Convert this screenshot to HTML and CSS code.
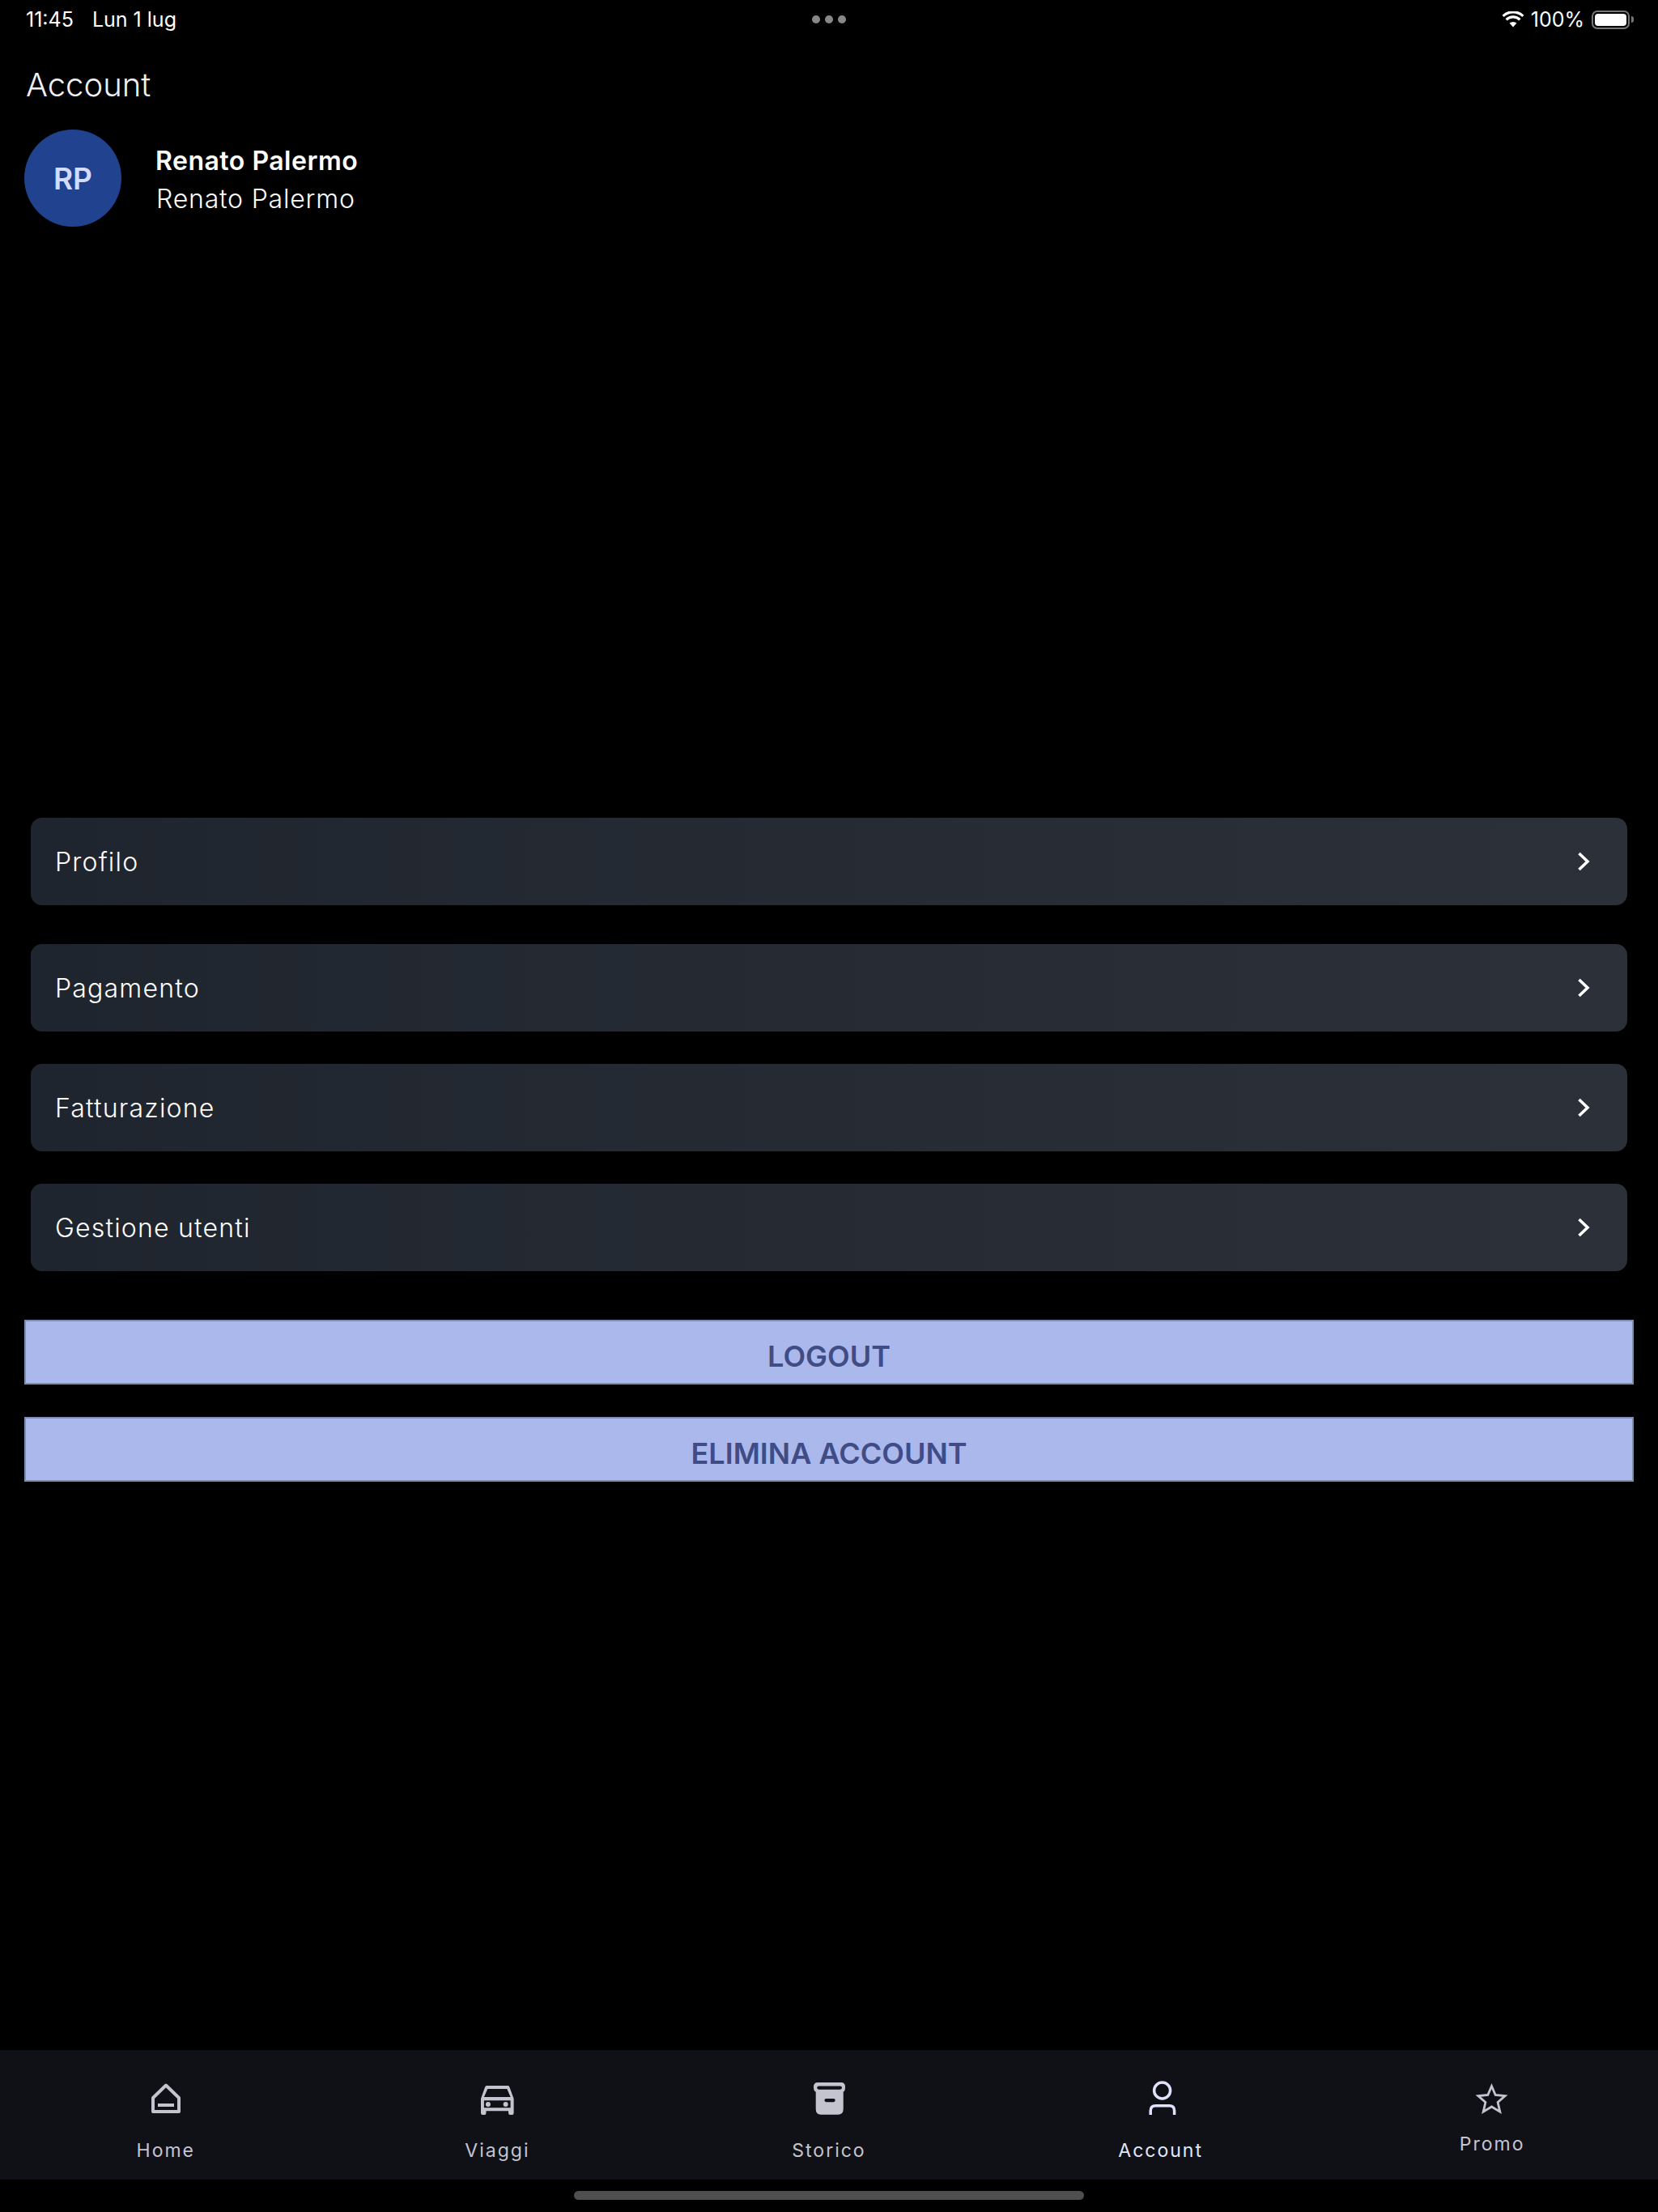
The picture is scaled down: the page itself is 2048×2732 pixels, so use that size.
FILE: index.html
```html
<!doctype html>
<html lang="it">
<head>
    <meta charset="UTF-8">
    <meta name="viewport" content="width=device-width, initial-scale=1.0">
    <title>Account</title>
    <link rel="stylesheet" href="styles.css">
</head>
<body>
<div class="page">
    <div class="statusbar">
        <div class="status-left"><span>11:45</span><span>Lun 1 lug</span></div>
        <div class="status-dots"><i></i><i></i><i></i></div>
        <div class="status-right">
            <svg class="wifi" width="28" height="20" viewBox="0 0 28 20">
                <path d="M14 19.500 L9.600 14.600 A6.600 6.600 0 0 1 18.400 14.600 Z" fill="#fff"/>
                <path d="M5.600 10.400 A12 12 0 0 1 22.400 10.400" fill="none" stroke="#fff" stroke-width="3.200"/>
                <path d="M1.600 5.800 A18 18 0 0 1 26.400 5.800" fill="none" stroke="#fff" stroke-width="3.200"/>
            </svg>
            <span>100%</span>
            <div class="battery"><div class="battery-fill"></div></div>
            <div class="battery-nub"></div>
        </div>
    </div>

    <h1 class="title">Account</h1>

    <div class="profile">
        <div class="avatar">RP</div>
        <div class="profile-text">
            <div class="profile-name">Renato Palermo</div>
            <div class="profile-sub">Renato Palermo</div>
        </div>
    </div>

    <div class="menu">
        <a class="menu-row first">
            <span>Profilo</span>
            <svg width="16" height="24" viewBox="0 0 16 24"><path d="M2.500 2 L13 12 L2.500 22" fill="none" stroke="#fff" stroke-width="3.600"/></svg>
        </a>
        <a class="menu-row">
            <span>Pagamento</span>
            <svg width="16" height="24" viewBox="0 0 16 24"><path d="M2.500 2 L13 12 L2.500 22" fill="none" stroke="#fff" stroke-width="3.600"/></svg>
        </a>
        <a class="menu-row">
            <span>Fatturazione</span>
            <svg width="16" height="24" viewBox="0 0 16 24"><path d="M2.500 2 L13 12 L2.500 22" fill="none" stroke="#fff" stroke-width="3.600"/></svg>
        </a>
        <a class="menu-row">
            <span>Gestione utenti</span>
            <svg width="16" height="24" viewBox="0 0 16 24"><path d="M2.500 2 L13 12 L2.500 22" fill="none" stroke="#fff" stroke-width="3.600"/></svg>
        </a>
    </div>

    <div class="actions">
        <button class="action-btn">LOGOUT</button>
        <button class="action-btn">ELIMINA ACCOUNT</button>
    </div>

    <div class="tabbar">
        <div class="tab">
            <svg width="48" height="48" viewBox="0 0 48 48">
                <path d="M24 5.500 L40 21 V38 H8 V21 Z" fill="none" stroke="#c4c4cf" stroke-width="4" stroke-linejoin="round"/>
                <rect x="14" y="28" width="20" height="4" fill="#c4c4cf"/>
            </svg>
            <span>Home</span>
        </div>
        <div class="tab">
            <svg width="48" height="48" viewBox="0 0 48 48">
                <path fill-rule="evenodd" fill="#c4c4cf" d="M11 6 H37.500 Q39 6 39.500 8 L44.600 22 V39.500 Q44.600 42 42.500 42 H40 Q38 42 38 39.500 V37.300 H10.500 V39.500 Q10.500 42 8.500 42 H6 Q4 42 4 39.500 V22 L9 8 Q9.600 6 11 6 Z M12.300 10 L7.900 20 H40.600 L36.300 10 Z M7.900 24.300 V33.300 H40.600 V24.300 Z"/>
                <circle cx="12.900" cy="29" r="3" fill="#c4c4cf"/>
                <circle cx="34.600" cy="29" r="3" fill="#c4c4cf"/>
            </svg>
            <span>Viaggi</span>
        </div>
        <div class="tab">
            <svg width="48" height="48" viewBox="0 0 48 48">
                <path d="M10 2 H39 Q44 2 44 7.500 Q44 13 41.700 13.500 V35 Q41.700 41.700 35 41.700 H14 Q7.700 41.700 7.700 35 V13.500 Q5 13 5 7.500 Q5 2 10 2 Z" fill="#c4c4cf"/>
                <rect x="9.300" y="6.500" width="30.700" height="4.200" rx="2.100" fill="#0f1117"/>
                <rect x="18.400" y="22" width="13.300" height="4.200" rx="2.100" fill="#0f1117"/>
            </svg>
            <span>Storico</span>
        </div>
        <div class="tab active">
            <svg width="48" height="48" viewBox="0 0 48 48">
                <circle cx="25.600" cy="12" r="10" fill="none" stroke="#dfe3fb" stroke-width="3.500"/>
                <path d="M11.200 42 V37 Q11.200 30.800 17.500 30.800 H34.500 Q40.600 30.800 40.600 37 V42" fill="none" stroke="#dfe3fb" stroke-width="3.500"/>
            </svg>
            <span>Account</span>
        </div>
        <div class="tab promo">
            <svg width="48" height="48" viewBox="0 0 48 48">
                <path d="M23.500 6.500 L28.200 17.500 L40.100 18.600 L31.100 26.500 L33.800 38.200 L23.500 32 L13.200 38.200 L15.900 26.500 L6.900 18.600 L18.800 17.500 Z" fill="none" stroke="#c4c4cf" stroke-width="2.800"/>
            </svg>
            <span>Promo</span>
        </div>
    </div>
    <div class="homebar"></div>
</div>
</body>
</html>
```

FILE: styles.css
```css
* {
    box-sizing: border-box;
}
body {
    margin: 0;
    background: #000;
    color: #fff;
    font-family: Inter, "Liberation Sans", sans-serif;
}
.page {
    width: 2048px;
    height: 2732px;
    display: flex;
    flex-direction: column;
    overflow: hidden;
}

/* status bar */
.statusbar {
    height: 48px;
    padding: 0 30px 0 32px;
    display: flex;
    align-items: center;
    justify-content: space-between;
    font-size: 25px;
    position: relative;
}
.status-left {
    display: flex;
    gap: 23px;
}
.status-dots {
    position: absolute;
    left: 1003px;
    top: 19px;
    display: flex;
    gap: 6px;
}
.status-dots i {
    width: 10px;
    height: 10px;
    border-radius: 5px;
    background: #888;
}
.status-right {
    display: flex;
    align-items: center;
}
.status-right span {
    margin-left: 8px;
    margin-right: 9px;
}
.battery {
    width: 47px;
    height: 23px;
    border: 2px solid #777;
    border-radius: 7px;
    padding: 2px;
}
.battery-fill {
    height: 100%;
    background: #fff;
    border-radius: 4px;
}
.battery-nub {
    width: 3px;
    height: 8px;
    margin-left: 2px;
    background: #777;
    border-radius: 0 3px 3px 0;
}

/* header */
.title {
    margin: 32px 0 0 32px;
    font-size: 40px;
    line-height: 50px;
    font-weight: 300;
    color: #f0f0f5;
}
.profile {
    margin: 30px 0 0 30px;
    display: flex;
    align-items: center;
    gap: 42px;
}
.avatar {
    width: 120px;
    height: 120px;
    border-radius: 50%;
    background: #21428f;
    color: #d3dcfb;
    font-size: 37px;
    font-weight: 600;
    display: flex;
    align-items: center;
    justify-content: center;
}
.profile-text {
    padding-top: 3px;
}
.profile-name {
    font-size: 32px;
    line-height: 47px;
    font-weight: 600;
    letter-spacing: 0.5px;
}
.profile-sub {
    font-size: 32px;
    line-height: 47px;
    font-weight: 300;
    letter-spacing: 0.800px;
    margin-left: 1px;
}

/* menu */
.menu {
    margin: 730px 38px 0;
    display: flex;
    flex-direction: column;
    gap: 40px;
}
.menu-row {
    height: 108px;
    padding: 0 46px 0 30px;
    border-radius: 14px;
    background: linear-gradient(to right, #1f252e, #2c3039);
    display: flex;
    align-items: center;
    justify-content: space-between;
    font-size: 32px;
    font-weight: 300;
    letter-spacing: 1.200px;
}
.menu-row.first {
    margin-bottom: 8px;
}

/* buttons */
.actions {
    margin: 60px 30px 0;
    display: flex;
    flex-direction: column;
    gap: 40px;
}
.action-btn {
    height: 80px;
    padding: 10px 0 0;
    background: #abb8ec;
    border: 2px solid #7b8db3;
    color: #404c86;
    font-family: inherit;
    font-size: 36px;
    font-weight: 600;
}

/* bottom tabs */
.tabbar {
    margin-top: auto;
    height: 160px;
    background: #0f1117;
    display: grid;
    grid-template-columns: repeat(5, 1fr);
}
.tab {
    padding-top: 38px;
    display: flex;
    flex-direction: column;
    align-items: center;
    color: #c4c4cf;
    font-size: 23px;
    font-weight: 400;
    letter-spacing: 2px;
}
.tab span {
    margin-top: 24px;
    line-height: 28px;
}
.tab.active {
    color: #e4e7fb;
}
.tab.promo span {
    margin-top: 16px;
}
.homebar {
    width: 630px;
    height: 11px;
    margin: 14px auto 15px;
    border-radius: 6px;
    background: #4f4f4f;
}
```
